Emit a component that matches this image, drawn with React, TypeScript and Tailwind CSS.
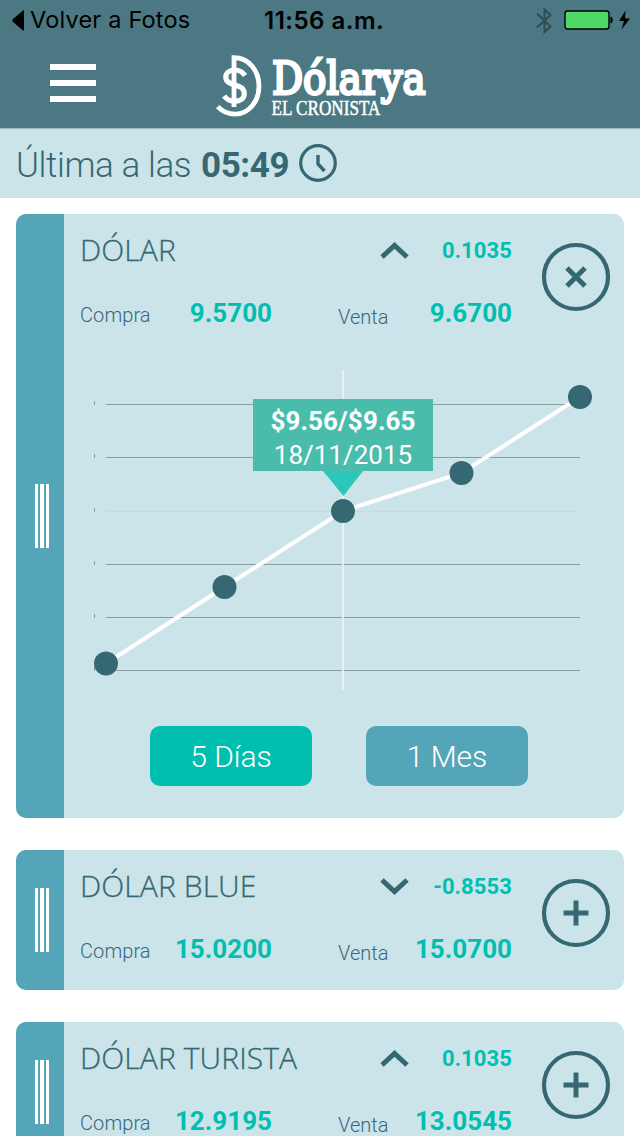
import { useState } from "react";

type Quote = {
  id: string;
  name: string;
  change: string;
  up: boolean;
  buy: string;
  sell: string;
};

const QUOTES: Quote[] = [
  { id: "dolar", name: "DÓLAR", change: "0.1035", up: true, buy: "9.5700", sell: "9.6700" },
  { id: "blue", name: "DÓLAR BLUE", change: "-0.8553", up: false, buy: "15.0200", sell: "15.0700" },
  { id: "turista", name: "DÓLAR TURISTA", change: "0.1035", up: true, buy: "12.9195", sell: "13.0545" },
];

const POINTS = [
  { x: 42, y: 309.5 },
  { x: 160.5, y: 233 },
  { x: 279, y: 157 },
  { x: 397.5, y: 119 },
  { x: 516, y: 43 },
];

const GRID = [50.5, 103.5, 157.5, 210.5, 263.5, 316.5];

function StatusBar() {
  return (
    <div className="flex h-10 items-center font-[Inter,sans-serif] text-black">
      <div className="flex w-[264px] items-center gap-[6px] pl-3 text-[23.5px] whitespace-nowrap">
        <svg width="12" height="22" viewBox="0 0 12 22">
          <path d="M12 1.5v20h-1L0.5 12.5v-2L11 1.5z" />
        </svg>
        <span className="tracking-[0.2px]">Volver a Fotos</span>
      </div>
      <div className="pt-[2px] text-[24px] font-semibold tracking-[0.5px] whitespace-nowrap">11:56 a.m.</div>
      <div className="ml-auto flex items-center pr-[8px]">
        <svg width="17" height="27" viewBox="0 0 17 27" fill="none" stroke="#2e4c53" strokeWidth="2">
          <path d="M1 6.5l13.500 13-6 5.500V2.500l6 5.500L1 20.500" />
        </svg>
        <svg className="ml-[11px]" width="68" height="22" viewBox="0 0 68 22">
          <rect x="1" y="2" width="44" height="18" rx="2.5" fill="#4cd964" stroke="#000" strokeWidth="1.400" />
          <path d="M46.5 7.5c3 .8 3 6.2 0 7z" />
          <path d="M61.500 1.5L55 12h5l-2.5 8.5L66 9.5h-5z" />
        </svg>
      </div>
    </div>
  );
}

function Logo() {
  return (
    <svg className="overflow-visible" width="220" height="72" viewBox="216 53 220 72" fill="#fff">
      <path
        d="M234 107V57.7c15 0 25 13.500 25 28.500s-10 28-24 28c-7 0-13-3-17.300-7.500"
        fill="none"
        stroke="#fff"
        strokeWidth="4.8"
      />
      <path
        d="M245 75.500c-2.500-3.800-6-5.500-10.500-5.500-5.500 0-8.700 3.200-8.700 7.200 0 10 18.500 5.500 18.500 16.300 0 5-4 7.800-9.500 7.800-4.500 0-8-1.800-10.700-5.300"
        fill="none"
        stroke="#fff"
        strokeWidth="5.200"
      />
      <text
        x="272"
        y="93.500"
        fontSize="45.5"
        textLength="153.500"
        lengthAdjust="spacingAndGlyphs"
        fontFamily="'DejaVu Serif', serif"
        stroke="#fff"
        strokeWidth="2.900"
      >
        Dólarya
      </text>
      <text
        x="271.500"
        y="114.500"
        fontSize="21"
        textLength="109"
        lengthAdjust="spacingAndGlyphs"
        fontFamily="'Liberation Serif', serif"
        stroke="#fff"
        strokeWidth="0.5"
      >
        EL CRONISTA
      </text>
    </svg>
  );
}

function Header() {
  return (
    <header className="h-32 bg-[#4b7882]">
      <StatusBar />
      <div className="flex items-start pl-[50px]">
        <button className="mt-6 flex w-[46px] flex-col gap-[10px]" aria-label="Menú">
          <span className="h-[6px] bg-white" />
          <span className="h-[6px] bg-white" />
          <span className="h-[6px] bg-white" />
        </button>
        <div className="mt-[13px] ml-[120px]">
          <Logo />
        </div>
      </div>
    </header>
  );
}

function LastUpdate() {
  return (
    <div className="flex h-[70px] items-center border-t border-[#9db9bf] bg-[#cbe4e9] pt-[5px] pl-4 text-[35px] text-[#356872]">
      <span className="w-[175px] font-light tracking-[-0.4px] whitespace-nowrap">Última a las</span>
      <span className="ml-[10px] w-[88px] font-bold tracking-[-0.4px]">05:49</span>
      <svg className="ml-[9px] overflow-visible" width="40" height="40" viewBox="0 0 40 40" fill="none" stroke="#356872">
        <circle cx="20" cy="17" r="17.300" strokeWidth="3.200" />
        <path d="M20 9v9l6.500 7" strokeWidth="3.400" />
      </svg>
    </div>
  );
}

function Chart() {
  return (
    <div className="relative h-[372px]">
      <svg width="560" height="372" viewBox="0 0 560 372">
        {GRID.map((y, i) => (
          <g key={y}>
            <path d={`M42 ${y}H516`} stroke={i === 2 ? "#d2d6d8" : "#8c9ba0"} strokeWidth="1.200" />
            <path d={`M30.500 ${y - 3.500}v4`} stroke="#829da3" />
          </g>
        ))}
        <path d="M279 16v320" stroke="#e6f1f6" strokeWidth="2" />
        <polyline points={POINTS.map((p) => `${p.x},${p.y}`).join(" ")} fill="none" stroke="#fff" strokeWidth="4" />
        {POINTS.map((p) => (
          <circle key={p.x} cx={p.x} cy={p.y} r="12" fill="#356872" />
        ))}
        <path d="M259 117h40l-19.500 25z" fill="#2bc7bb" />
      </svg>
      <div className="absolute top-[45px] left-[189px] h-[72px] w-[180px] bg-[#4abcac] pt-[5px] text-center text-[26px] leading-[34px] text-white">
        <div className="font-bold tracking-[0.1px]">$9.56/$9.65</div>
        <div>18/11/2015</div>
      </div>
    </div>
  );
}

function RangeButtons() {
  const [range, setRange] = useState("5 Días");

  return (
    <div className="flex gap-[54px] pl-[86px]">
      {["5 Días", "1 Mes"].map((label) => (
        <button
          key={label}
          onClick={() => setRange(label)}
          className={`h-[60px] w-[162px] rounded-[10px] text-[30px] font-light text-white ${
            range === label ? "bg-[#00bfb0]" : "bg-[#55a5b8]"
          }`}
        >
          {label}
        </button>
      ))}
    </div>
  );
}

function QuoteCard({ quote, open, onToggle }: { quote: Quote; open: boolean; onToggle: () => void }) {
  return (
    <section className={`flex shrink-0 overflow-hidden rounded-[10px] bg-[#cbe4e9] ${open ? "h-[604px]" : "h-[140px]"}`}>
      <div className="flex w-12 items-center justify-center gap-[2px] bg-[#55a5b8] pl-1">
        <span className="h-16 w-[3.500px] bg-white" />
        <span className="h-16 w-[3.500px] bg-white" />
        <span className="h-16 w-[3.500px] bg-white" />
      </div>
      <div className="flex-1">
        <div className="flex h-[140px] pl-4">
          <div className="w-[432px]">
            <div className="flex h-[73px] items-center">
              <h2 className="w-[298px] pb-px font-['Open_Sans',sans-serif] text-[30px] leading-[42px] font-light tracking-[0.1px] text-[#356872] [-webkit-text-stroke:0.3px_#356872]">
                {quote.name}
              </h2>
              <svg width="32" height="20" viewBox="0 0 32 20" fill="none" stroke="#356872" strokeWidth="5">
                <path d={quote.up ? "M4 16L16.500 4.500 29 16" : "M4 3L16.500 14.500 29 3"} />
              </svg>
              <span className="flex-1 text-right text-[22px] font-bold tracking-[0.1px] text-[#00bfb0]">{quote.change}</span>
            </div>
            <div className="flex items-baseline pt-[7px] leading-[38px] text-[#356880]">
              <span className="text-[20px] font-light tracking-[0.1px]">Compra</span>
              <span className="ml-auto text-[26px] font-bold text-[#00bfb0]">{quote.buy}</span>
              <div className="ml-[66px] flex w-[174px] items-baseline justify-between">
                <span className="relative top-[2px] text-[20px] font-light">Venta</span>
                <span className="text-[26px] font-bold text-[#00bfb0]">{quote.sell}</span>
              </div>
            </div>
          </div>
          <button className="mt-7 ml-[29px] h-[70px] w-[70px]" onClick={onToggle} aria-label={quote.name}>
            <svg width="70" height="70" viewBox="0 0 70 70" fill="none" stroke="#356872">
              <circle cx="35" cy="35" r="32" strokeWidth="4.200" />
              <path d={open ? "M26 26l18 18M44 26L26 44" : "M35 22.500v25M22.500 35h25"} strokeWidth="5" />
            </svg>
          </button>
        </div>
        {open && (
          <>
            <Chart />
            <RangeButtons />
          </>
        )}
      </div>
    </section>
  );
}

export default function App() {
  const [openId, setOpenId] = useState<string | null>("dolar");

  return (
    <div className="h-[1136px] w-[640px] overflow-hidden bg-white font-[Roboto,sans-serif]">
      <Header />
      <LastUpdate />
      <main className="flex flex-col gap-8 p-4">
        {QUOTES.map((q) => (
          <QuoteCard key={q.id} quote={q} open={openId === q.id} onToggle={() => setOpenId(openId === q.id ? null : q.id)} />
        ))}
      </main>
    </div>
  );
}
